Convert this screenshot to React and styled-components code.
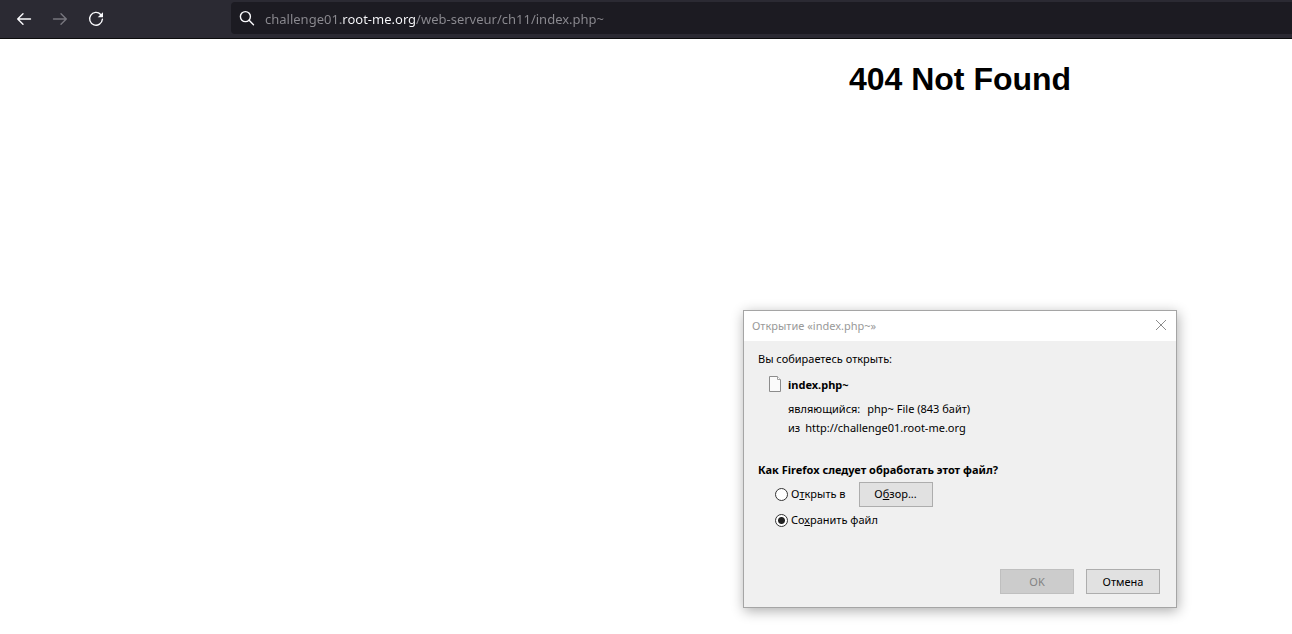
import React, { useState } from 'react';
import styled, { createGlobalStyle } from 'styled-components';

const GlobalStyle = createGlobalStyle`
  * { box-sizing: border-box; }
  body {
    margin: 0;
    background: #fff;
    color: #000;
    font-family: "Noto Sans", "Open Sans", sans-serif;
    font-size: 11px;
    line-height: 16px;
    overflow-x: hidden;
  }
`;

const Toolbar = styled.header`
  display: flex;
  align-items: flex-start;
  height: 39px;
  padding: 2px 0 0 8px;
  background: #2b2a33;
  border-bottom: 1px solid #0c0c0d;
`;

const NavButtons = styled.nav`
  display: flex;
  gap: 4px;
  width: 223px;
`;

const NavButton = styled.button`
  display: flex;
  align-items: center;
  justify-content: center;
  width: 32px;
  height: 33px;
  padding: 0;
  border: 0;
  background: none;
  color: #fbfbfe;
  &:disabled { color: #77767e; }
`;

const UrlBar = styled.label`
  display: flex;
  flex: 1;
  align-items: center;
  gap: 10px;
  height: 32px;
  padding-left: 8px;
  border-radius: 4px 0 0 4px;
  background: #1c1b22;
  color: #fbfbfe;
`;

const UrlInput = styled.input`
  flex: 1;
  min-width: 0;
  height: 24px;
  margin-top: 2px;
  padding: 0;
  border: 0;
  outline: 0;
  font: 13px/24px "Noto Sans", "Open Sans", sans-serif;
  color: transparent;
  caret-color: #fbfbfe;
  background: linear-gradient(
    to right,
    #8c8b91 76px, #fbfbfe 76px, #fbfbfe 151px, #8c8b91 151px
  );
  background-clip: text;
  -webkit-background-clip: text;
`;

const Page = styled.main`
  display: flex;
  flex-direction: column;
  align-items: center;
  padding: 22px 0 26px 628px;
`;

const Heading = styled.h1`
  margin: 0;
  font: bold 32px/37px "Liberation Sans", Arial, sans-serif;
`;

const Dialog = styled.section`
  width: 434px;
  margin-top: 212px;
  border: 1px solid #a5a5a5;
  background: #f0f0f0;
  box-shadow: 1px 3px 12px rgba(0, 0, 0, 0.32);
`;

const TitleBar = styled.div`
  display: flex;
  align-items: center;
  justify-content: space-between;
  height: 30px;
  padding: 0 9px 0 8px;
  background: #fff;
  color: #999;
`;

const Title = styled.h2`
  margin: 0;
  font-size: 11px;
  font-weight: normal;
`;

const CloseButton = styled.button`
  display: flex;
  padding: 0 0 2px;
  border: 0;
  background: none;
  color: #8c8c8c;
`;

const DialogBody = styled.form`
  padding: 10px 16px 13px 14px;
`;

const Text = styled.p`
  margin: 0;
`;

const FileInfo = styled.div`
  display: grid;
  grid-template-columns: 12px 1fr;
  column-gap: 7px;
  row-gap: 3px;
  padding: 9px 0 0 11px;
`;

const FileName = styled.strong`
  padding: 1px 0 5px;
`;

const Detail = styled.div`
  display: flex;
  grid-column: 2;
  gap: ${(p) => p.$gap}px;
`;

const Options = styled.fieldset`
  margin: 26px 0 0;
  padding: 0;
  border: 0;
`;

const Legend = styled.legend`
  padding: 0 0 3px;
  font-weight: bold;
`;

const OptionRow = styled.div`
  display: flex;
  align-items: center;
  gap: 13px;
  height: 26px;
  padding-left: 17px;
`;

const Option = styled.label`
  display: flex;
  align-items: center;
  gap: 3px;
`;

const Radio = styled.input`
  appearance: none;
  width: 13px;
  height: 13px;
  margin: 0;
  border: 1px solid #333;
  border-radius: 50%;
  background: #fff;
  &:checked {
    background: radial-gradient(circle, #222 3px, #fff 4px);
  }
`;

const Button = styled.button`
  width: 74px;
  height: 25px;
  padding: 0;
  border: 1px solid #adadad;
  background: #e1e1e1;
  color: #000;
  font: inherit;
  &:disabled {
    border-color: #bfbfbf;
    background: #ccc;
    color: #838383;
  }
`;

const Actions = styled.div`
  display: flex;
  justify-content: flex-end;
  gap: 12px;
  margin-top: 36px;
`;

function BackIcon() {
  return (
    <svg width="16" height="16" viewBox="0 0 16 16" fill="none" stroke="currentColor" strokeWidth="1.4" strokeLinecap="round" strokeLinejoin="round">
      <path d="M14.5 8H1.7M7 2.7L1.7 8 7 13.3" />
    </svg>
  );
}

function ForwardIcon() {
  return (
    <svg width="16" height="16" viewBox="0 0 16 16" fill="none" stroke="currentColor" strokeWidth="1.4" strokeLinecap="round" strokeLinejoin="round">
      <path d="M1.5 8h12.8M9 2.7L14.3 8 9 13.3" />
    </svg>
  );
}

function ReloadIcon() {
  return (
    <svg width="16" height="16" viewBox="0 0 16 16" fill="none">
      <path d="M12.7 3.4A6.4 6.4 0 1 0 14.4 8.3" stroke="currentColor" strokeWidth="1.4" strokeLinecap="round" />
      <path d="M15 1.2v4.6a.5.5 0 0 1-.5.5H9.7z" fill="currentColor" />
    </svg>
  );
}

function SearchIcon() {
  return (
    <svg width="16" height="16" viewBox="0 0 16 16" fill="none" stroke="currentColor" strokeWidth="1.4" strokeLinecap="round">
      <circle cx="6.4" cy="6.6" r="5" />
      <path d="M10.1 10.3l4.4 4.4" />
    </svg>
  );
}

function FileIcon() {
  return (
    <svg width="12" height="16" viewBox="0 0 12 16">
      <path d="M.5.5h8l3 3v12H.5z" fill="#fafafa" stroke="#8c8c8c" />
      <path d="M8.5.5v3h3" fill="#fff" stroke="#a0a0a0" />
    </svg>
  );
}

function CloseIcon() {
  return (
    <svg width="12" height="12" viewBox="0 0 12 12" stroke="currentColor" strokeWidth="1">
      <path d="M1 1l10 10M11 1L1 11" />
    </svg>
  );
}

export default function App() {
  const [choice, setChoice] = useState('save');
  const [url, setUrl] = useState('challenge01.root-me.org/web-serveur/ch11/index.php~');

  return (
    <>
      <GlobalStyle />
      <Toolbar>
        <NavButtons>
          <NavButton type="button" aria-label="Назад"><BackIcon /></NavButton>
          <NavButton type="button" aria-label="Вперёд" disabled><ForwardIcon /></NavButton>
          <NavButton type="button" aria-label="Обновить"><ReloadIcon /></NavButton>
        </NavButtons>
        <UrlBar>
          <SearchIcon />
          <UrlInput
            type="text"
            aria-label="Адрес"
            spellCheck={false}
            value={url}
            onChange={(e) => setUrl(e.target.value)}
          />
        </UrlBar>
      </Toolbar>
      <Page>
        <Heading>404 Not Found</Heading>
        <Dialog role="dialog" aria-labelledby="dialog-title">
          <TitleBar>
            <Title id="dialog-title">Открытие «index.php~»</Title>
            <CloseButton type="button" aria-label="Закрыть"><CloseIcon /></CloseButton>
          </TitleBar>
          <DialogBody onSubmit={(e) => e.preventDefault()}>
            <Text>Вы собираетесь открыть:</Text>
            <FileInfo>
              <FileIcon />
              <FileName>index.php~</FileName>
              <Detail $gap={7}><span>являющийся:</span><span>php~ File (843 байт)</span></Detail>
              <Detail $gap={5}><span>из</span><span>http://challenge01.root-me.org</span></Detail>
            </FileInfo>
            <Options>
              <Legend>Как Firefox следует обработать этот файл?</Legend>
              <OptionRow>
                <Option>
                  <Radio type="radio" name="action" checked={choice === 'open'} onChange={() => setChoice('open')} />
                  <span>О<u>т</u>крыть в</span>
                </Option>
                <Button type="button">О<u>б</u>зор...</Button>
              </OptionRow>
              <OptionRow>
                <Option>
                  <Radio type="radio" name="action" checked={choice === 'save'} onChange={() => setChoice('save')} />
                  <span>Со<u>х</u>ранить файл</span>
                </Option>
              </OptionRow>
            </Options>
            <Actions>
              <Button type="submit" disabled>OK</Button>
              <Button type="button">Отмена</Button>
            </Actions>
          </DialogBody>
        </Dialog>
      </Page>
    </>
  );
}
